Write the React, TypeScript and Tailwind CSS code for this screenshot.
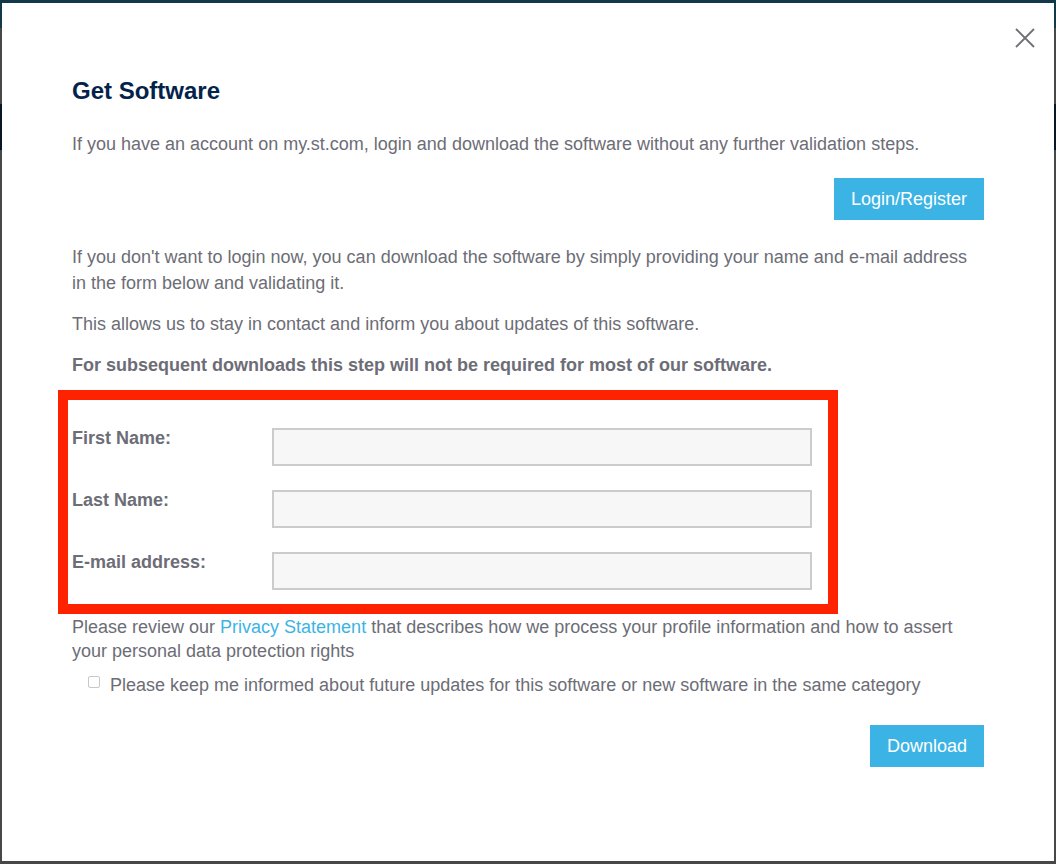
import React from "react";

export default function App() {
  const font = { fontFamily: '"Liberation Sans", Arial, Helvetica, sans-serif' };
  return (
    <div className="relative w-[1056px] h-[864px] overflow-hidden bg-[#474747]" style={font}>
      {/* underlying page bands */}
      <div className="absolute left-0 top-0 w-full h-[28px] bg-[#12394a]" />
      <div className="absolute left-0 top-[104px] w-full h-[46px] bg-[#0a1622]" />
      {/* modal */}
      <div className="absolute left-[2px] top-[3px] w-[1052px] h-[858px] bg-white">
        <button className="absolute right-[18px] top-[24px] w-[22px] h-[22px] flex items-center justify-center">
          <svg width="22" height="22" viewBox="0 0 22 22">
            <path d="M2 2 L20 20 M20 2 L2 20" stroke="#6e6f78" strokeWidth="1.8" fill="none" />
          </svg>
        </button>
        <div className="flex flex-col pl-[70px] pr-[70px] pt-[73px] text-[18px] text-[#6c6d76]">
          <h2 className="text-[24px] leading-[29px] font-bold text-[#03234b]">Get Software</h2>
          <p className="mt-[26px] leading-[26px]">
            If you have an account on my.st.com, login and download the software without any further validation steps.
          </p>
          <div className="flex justify-end mt-[21px]">
            <button className="h-[42px] px-[17px] bg-[#3bb4e5] text-white text-[18px]">Login/Register</button>
          </div>
          <p className="mt-[24px] leading-[26px]">
            If you don't want to login now, you can download the software by simply providing your name and e-mail address in the form below and validating it.
          </p>
          <p className="mt-[15px] leading-[26px]">
            This allows us to stay in contact and inform you about updates of this software.
          </p>
          <p className="mt-[15px] leading-[26px] font-bold">
            For subsequent downloads this step will not be required for most of our software.
          </p>
          <div className="mt-[12px] -ml-[14px] w-[780px] border-[10px] border-[#ff2200] pl-[4px] pt-[28px] pb-[14px] flex flex-col gap-[24px]">
            {["First Name:", "Last Name:", "E-mail address:"].map((l) => (
              <div key={l} className="flex items-start">
                <label className="w-[200px] font-bold leading-[20px]">{l}</label>
                <input className="w-[540px] h-[38px] border-2 border-[#cccccc] bg-[#f7f7f7] outline-none" />
              </div>
            ))}
          </div>
          <p className="mt-[1px] leading-[24px]">
            Please review our <span className="text-[#3bb4e5]">Privacy Statement</span> that describes how we process your profile information and how to assert your personal data protection rights
          </p>
          <div className="flex items-center mt-[10px] pl-[16px] leading-[24px]">
            <span className="w-[12px] h-[12px] border border-[#c8c8c8] rounded-[2px] bg-white mr-[10px] mt-[-6px]" />
            <span>Please keep me informed about future updates for this software or new software in the same category</span>
          </div>
          <div className="flex justify-end mt-[28px]">
            <button className="h-[42px] px-[17px] bg-[#3bb4e5] text-white text-[18px]">Download</button>
          </div>
        </div>
      </div>
    </div>
  );
}
